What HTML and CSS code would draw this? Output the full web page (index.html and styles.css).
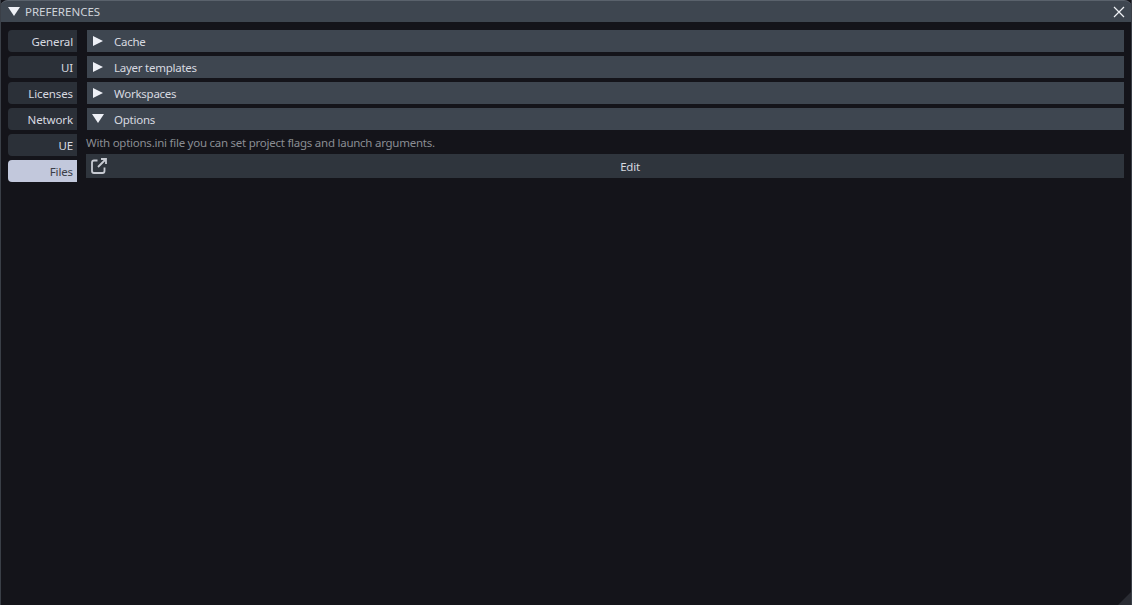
FILE: index.html
```html
<!DOCTYPE html>
<html lang="en">
<head>
    <meta charset="UTF-8">
    <title>Preferences</title>
    <link rel="stylesheet" href="styles.css">
</head>
<body>
    <div class="window">
        <div class="titlebar">
            <svg class="arrow arrow-title" viewBox="0 0 12 9"><polygon points="0,0 12,0 6,9"/></svg>
            <span class="title">PREFERENCES</span>
            <svg class="close" viewBox="0 0 12 12"><path d="M1 1 L11 11 M11 1 L1 11"/></svg>
        </div>
        <div class="main">
            <div class="tabs">
                <div class="tab">General</div>
                <div class="tab">UI</div>
                <div class="tab">Licenses</div>
                <div class="tab">Network</div>
                <div class="tab">UE</div>
                <div class="tab active">Files</div>
            </div>
            <div class="content">
                <div class="section">
                    <svg class="arrow" viewBox="0 0 10 10"><polygon points="0,0 10,5 0,10"/></svg>
                    <span>Cache</span>
                </div>
                <div class="section">
                    <svg class="arrow" viewBox="0 0 10 10"><polygon points="0,0 10,5 0,10"/></svg>
                    <span>Layer templates</span>
                </div>
                <div class="section">
                    <svg class="arrow" viewBox="0 0 10 10"><polygon points="0,0 10,5 0,10"/></svg>
                    <span>Workspaces</span>
                </div>
                <div class="section">
                    <svg class="arrow arrow-open" viewBox="0 0 12 9"><polygon points="0,0 12,0 6,9"/></svg>
                    <span>Options</span>
                </div>
                <p class="hint">With options.ini file you can set project flags and launch arguments.</p>
                <div class="edit">
                    <svg class="edit-icon" viewBox="0 0 16 16"><path d="M6.5 2.5 H3 Q1 2.5 1 4.5 V13 Q1 15 3 15 H11.5 Q13.5 15 13.5 13 V9.5"/><path d="M7 9 L14.5 1.5 M10 1 H15 V6"/></svg>
                    <span class="edit-label">Edit</span>
                </div>
            </div>
        </div>
        <div class="grip"></div>
    </div>
</body>
</html>
```

FILE: styles.css
```css
* {
    box-sizing: border-box;
}

html, body {
    margin: 0;
    height: 100%;
}

body {
    font-family: "Noto Sans", "Open Sans", sans-serif;
    font-size: 11.5px;
    letter-spacing: -0.25px;
    color: #d8dae0;
    background-color: #14141a;
    overflow: hidden;
}

.window {
    position: relative;
    height: 605px;
    background-color: #14141a;
    border-left: 1px solid #3a3f47;
    border-right: 1px solid #3a3f47;
    overflow: hidden;
}

.titlebar {
    display: flex;
    align-items: center;
    height: 22px;
    margin: 0 -1px;
    padding: 0 7px 0 8px;
    background-color: #3e4650;
    border-top: 1px solid #5a626c;
    border-radius: 8px 8px 0 0;
}

.title {
    margin-left: 5px;
    color: #cfd3da;
    letter-spacing: 0;
}

.close {
    width: 12px;
    height: 12px;
    margin-left: auto;
    fill: none;
    stroke: #f0f2f6;
    stroke-width: 1.2;
}

.arrow {
    flex: none;
    fill: #eef0f6;
}

.arrow-title {
    width: 12px;
    height: 9px;
    margin-top: -1px;
}

.main {
    display: flex;
    padding: 8px 7px 0 7px;
}

.tabs {
    display: flex;
    flex-direction: column;
    gap: 4px;
    width: 69px;
    margin-right: 10px;
}

.tab {
    height: 22px;
    line-height: 24px;
    padding-right: 4px;
    text-align: right;
    letter-spacing: -0.12px;
    background-color: #2b3038;
    border-radius: 4px 0 0 4px;
}

.tab.active {
    color: #3a3e48;
    background-color: #c2c8dc;
}

.content {
    flex: 1;
    display: flex;
    flex-direction: column;
    gap: 4px;
}

.section {
    display: flex;
    align-items: center;
    height: 22px;
    padding-left: 6px;
    background-color: #3e4650;
}

.section span {
    margin-left: 11px;
}

.section .arrow {
    width: 10px;
    height: 10px;
}

.section .arrow-open {
    width: 12px;
    height: 9px;
    margin-top: -1px;
    margin-left: -1px;
    margin-right: -1px;
}

.hint {
    margin: 0 0 0 -1px;
    height: 20px;
    line-height: 18px;
    color: #8a8d93;
}

.edit {
    position: relative;
    display: flex;
    align-items: center;
    justify-content: center;
    height: 24px;
    margin: -4px 0 0 -1px;
    padding-top: 1px;
    padding-left: 50px;
    background-color: #2f353d;
}

.edit-icon {
    position: absolute;
    left: 5px;
    top: 4px;
    width: 16px;
    height: 16px;
    fill: none;
    stroke: #c8cbd3;
    stroke-width: 1.8;
}

.grip {
    position: absolute;
    right: -1px;
    bottom: 0;
    width: 0;
    height: 0;
    border-style: solid;
    border-width: 0 0 14px 14px;
    border-color: transparent transparent #2a2c33 transparent;
}
```
